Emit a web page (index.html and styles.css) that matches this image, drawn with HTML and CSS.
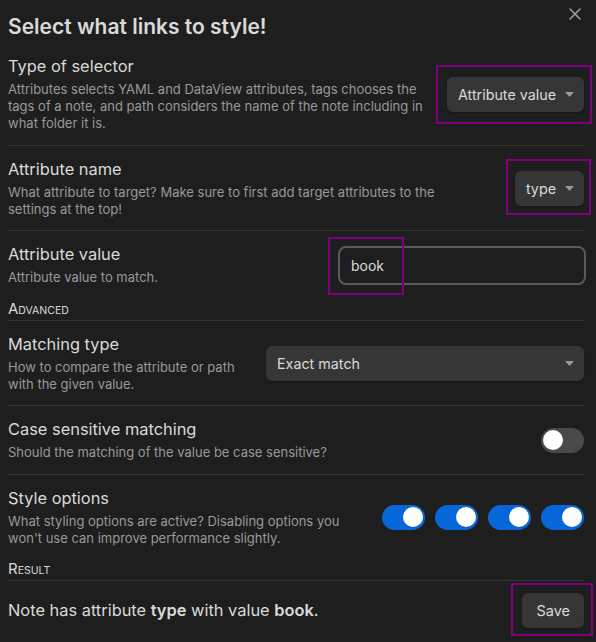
FILE: index.html
```html
<!DOCTYPE html>
<html>
<head>
<meta charset="utf-8">
<link rel="stylesheet" href="styles.css">
</head>
<body>
<div class="modal">
  <div class="close" aria-label="Close">
    <svg width="12" height="12" viewBox="0 0 12 12"><path d="M1 1L11 11M11 1L1 11" stroke="#a0a0a0" stroke-width="1.5" fill="none" stroke-linecap="round"/></svg>
  </div>
  <div class="title">Select what links to style!</div>

  <div class="setting first">
    <div class="info">
      <div class="name">Type of selector</div>
      <div class="desc">Attributes selects YAML and DataView attributes, tags chooses the tags of a note, and path considers the name of the note including in what folder it is.</div>
    </div>
    <div class="control">
      <div class="anchor">
        <div class="select">Attribute value<svg class="arrow" width="9" height="5" viewBox="0 0 9 5"><polygon points="0,0 9,0 4.5,5" fill="#9a9a9a"/></svg></div>
        <span class="mark mark-selector"></span>
      </div>
    </div>
  </div>

  <div class="setting">
    <div class="info">
      <div class="name">Attribute name</div>
      <div class="desc desc-narrow">What attribute to target? Make sure to first add target attributes to the settings at the top!</div>
    </div>
    <div class="control">
      <div class="anchor">
        <div class="select">type<svg class="arrow" width="9" height="5" viewBox="0 0 9 5"><polygon points="0,0 9,0 4.5,5" fill="#9a9a9a"/></svg></div>
        <span class="mark mark-type"></span>
      </div>
    </div>
  </div>

  <div class="setting">
    <div class="info">
      <div class="name">Attribute value</div>
      <div class="desc">Attribute value to match.</div>
    </div>
    <div class="control">
      <div class="anchor">
        <div class="input">book</div>
        <span class="mark mark-book"></span>
      </div>
    </div>
  </div>

  <div class="heading">A<span class="sc">dvanced</span></div>

  <div class="setting">
    <div class="info">
      <div class="name">Matching type</div>
      <div class="desc">How to compare the attribute or path with the given value.</div>
    </div>
    <div class="control">
      <div class="select wide">Exact match<svg class="arrow" width="9" height="5" viewBox="0 0 9 5"><polygon points="0,0 9,0 4.5,5" fill="#9a9a9a"/></svg></div>
    </div>
  </div>

  <div class="setting">
    <div class="info">
      <div class="name">Case sensitive matching</div>
      <div class="desc">Should the matching of the value be case sensitive?</div>
    </div>
    <div class="control">
      <div class="toggle"></div>
    </div>
  </div>

  <div class="setting">
    <div class="info">
      <div class="name">Style options</div>
      <div class="desc">What styling options are active? Disabling options you won't use can improve performance slightly.</div>
    </div>
    <div class="control toggles">
      <div class="toggle on"></div>
      <div class="toggle on"></div>
      <div class="toggle on"></div>
      <div class="toggle on"></div>
    </div>
  </div>

  <div class="heading">R<span class="sc">esult</span></div>

  <div class="setting result-row">
    <div class="info">
      <div class="result">Note has attribute <strong>type</strong> with value <strong>book</strong>.</div>
    </div>
    <div class="control">
      <div class="anchor">
        <div class="button">Save</div>
        <span class="mark mark-save"></span>
      </div>
    </div>
  </div>
</div>
</body>
</html>
```
FILE: styles.css
```css
* { box-sizing: border-box; }

html, body {
  margin: 0;
  background: #1e1e1e;
}

body {
  font-family: Inter, "Noto Sans", sans-serif;
  color: #dadada;
  overflow: hidden;
}

.modal {
  position: relative;
  padding: 13px 12px 0 8px;
}

.close {
  position: absolute;
  top: 8px;
  right: 15px;
  width: 12px;
  height: 12px;
  display: flex;
}

.title {
  font-size: 21px;
  font-weight: 600;
  line-height: 27px;
  margin-bottom: 3px;
}

.setting {
  display: flex;
  align-items: center;
  padding: 13px 0 12.5px;
  border-top: 1px solid #363636;
}

.setting.first,
.heading + .setting {
  border-top: none;
}

.setting.result-row {
  padding-top: 12px;
}

.info {
  flex: 1 1 auto;
  margin-right: 16px;
}

.name {
  font-size: 16.4px;
  line-height: 21px;
}

.desc {
  font-size: 13px;
  line-height: 17px;
  color: #999999;
  padding-top: 4px;
}

.desc-narrow {
  max-width: 470px;
}

.control {
  flex: 0 0 auto;
  display: flex;
  justify-content: flex-end;
  align-items: center;
}

.toggles {
  gap: 10px;
}

.anchor {
  position: relative;
  display: flex;
}

.select {
  display: flex;
  align-items: center;
  justify-content: space-between;
  gap: 9px;
  height: 35px;
  padding: 0 10px 0 11px;
  background: #363636;
  border-radius: 6px;
  box-shadow: 0 1px 2px rgba(0, 0, 0, 0.35);
  font-size: 14.3px;
  color: #dadada;
}

.select.wide {
  width: 318px;
}

.input {
  width: 248px;
  height: 39px;
  margin-right: -2px;
  padding: 0 11px;
  display: flex;
  align-items: center;
  border: 2px solid #5a5a5a;
  border-radius: 8px;
  font-size: 14px;
  color: #dadada;
}

.heading {
  font-size: 15px;
  line-height: 19px;
  padding: 0;
  border-bottom: 1px solid #363636;
}

.heading .sc {
  font-size: 10.5px;
  text-transform: uppercase;
}

.toggle {
  position: relative;
  width: 43px;
  height: 25px;
  border-radius: 13px;
  background: #4a4a4a;
}

.toggle::after {
  content: "";
  position: absolute;
  top: 2.5px;
  left: 2px;
  width: 20px;
  height: 20px;
  border-radius: 50%;
  background: #ffffff;
}

.toggle.on {
  background: #0867d8;
}

.toggle.on::after {
  left: auto;
  right: 2px;
}

.result {
  font-size: 16.4px;
  line-height: 21px;
}

.result strong {
  font-weight: 600;
}

.button {
  height: 35px;
  padding: 0 14px;
  display: flex;
  align-items: center;
  background: #363636;
  border-radius: 6px;
  box-shadow: 0 1px 2px rgba(0, 0, 0, 0.35);
  font-size: 14.5px;
  color: #dadada;
}

.mark {
  position: absolute;
  border: 2px solid #800080;
  pointer-events: none;
}

.mark-selector { left: -11px; right: -8px; top: -12px; bottom: -12px; }
.mark-type { left: -9px; right: -7px; top: -12px; bottom: -9px; }
.mark-book { left: -10px; top: -9px; width: 76px; height: 58px; }
.mark-save { left: -11px; right: -9px; top: -10px; bottom: -8px; }
```
